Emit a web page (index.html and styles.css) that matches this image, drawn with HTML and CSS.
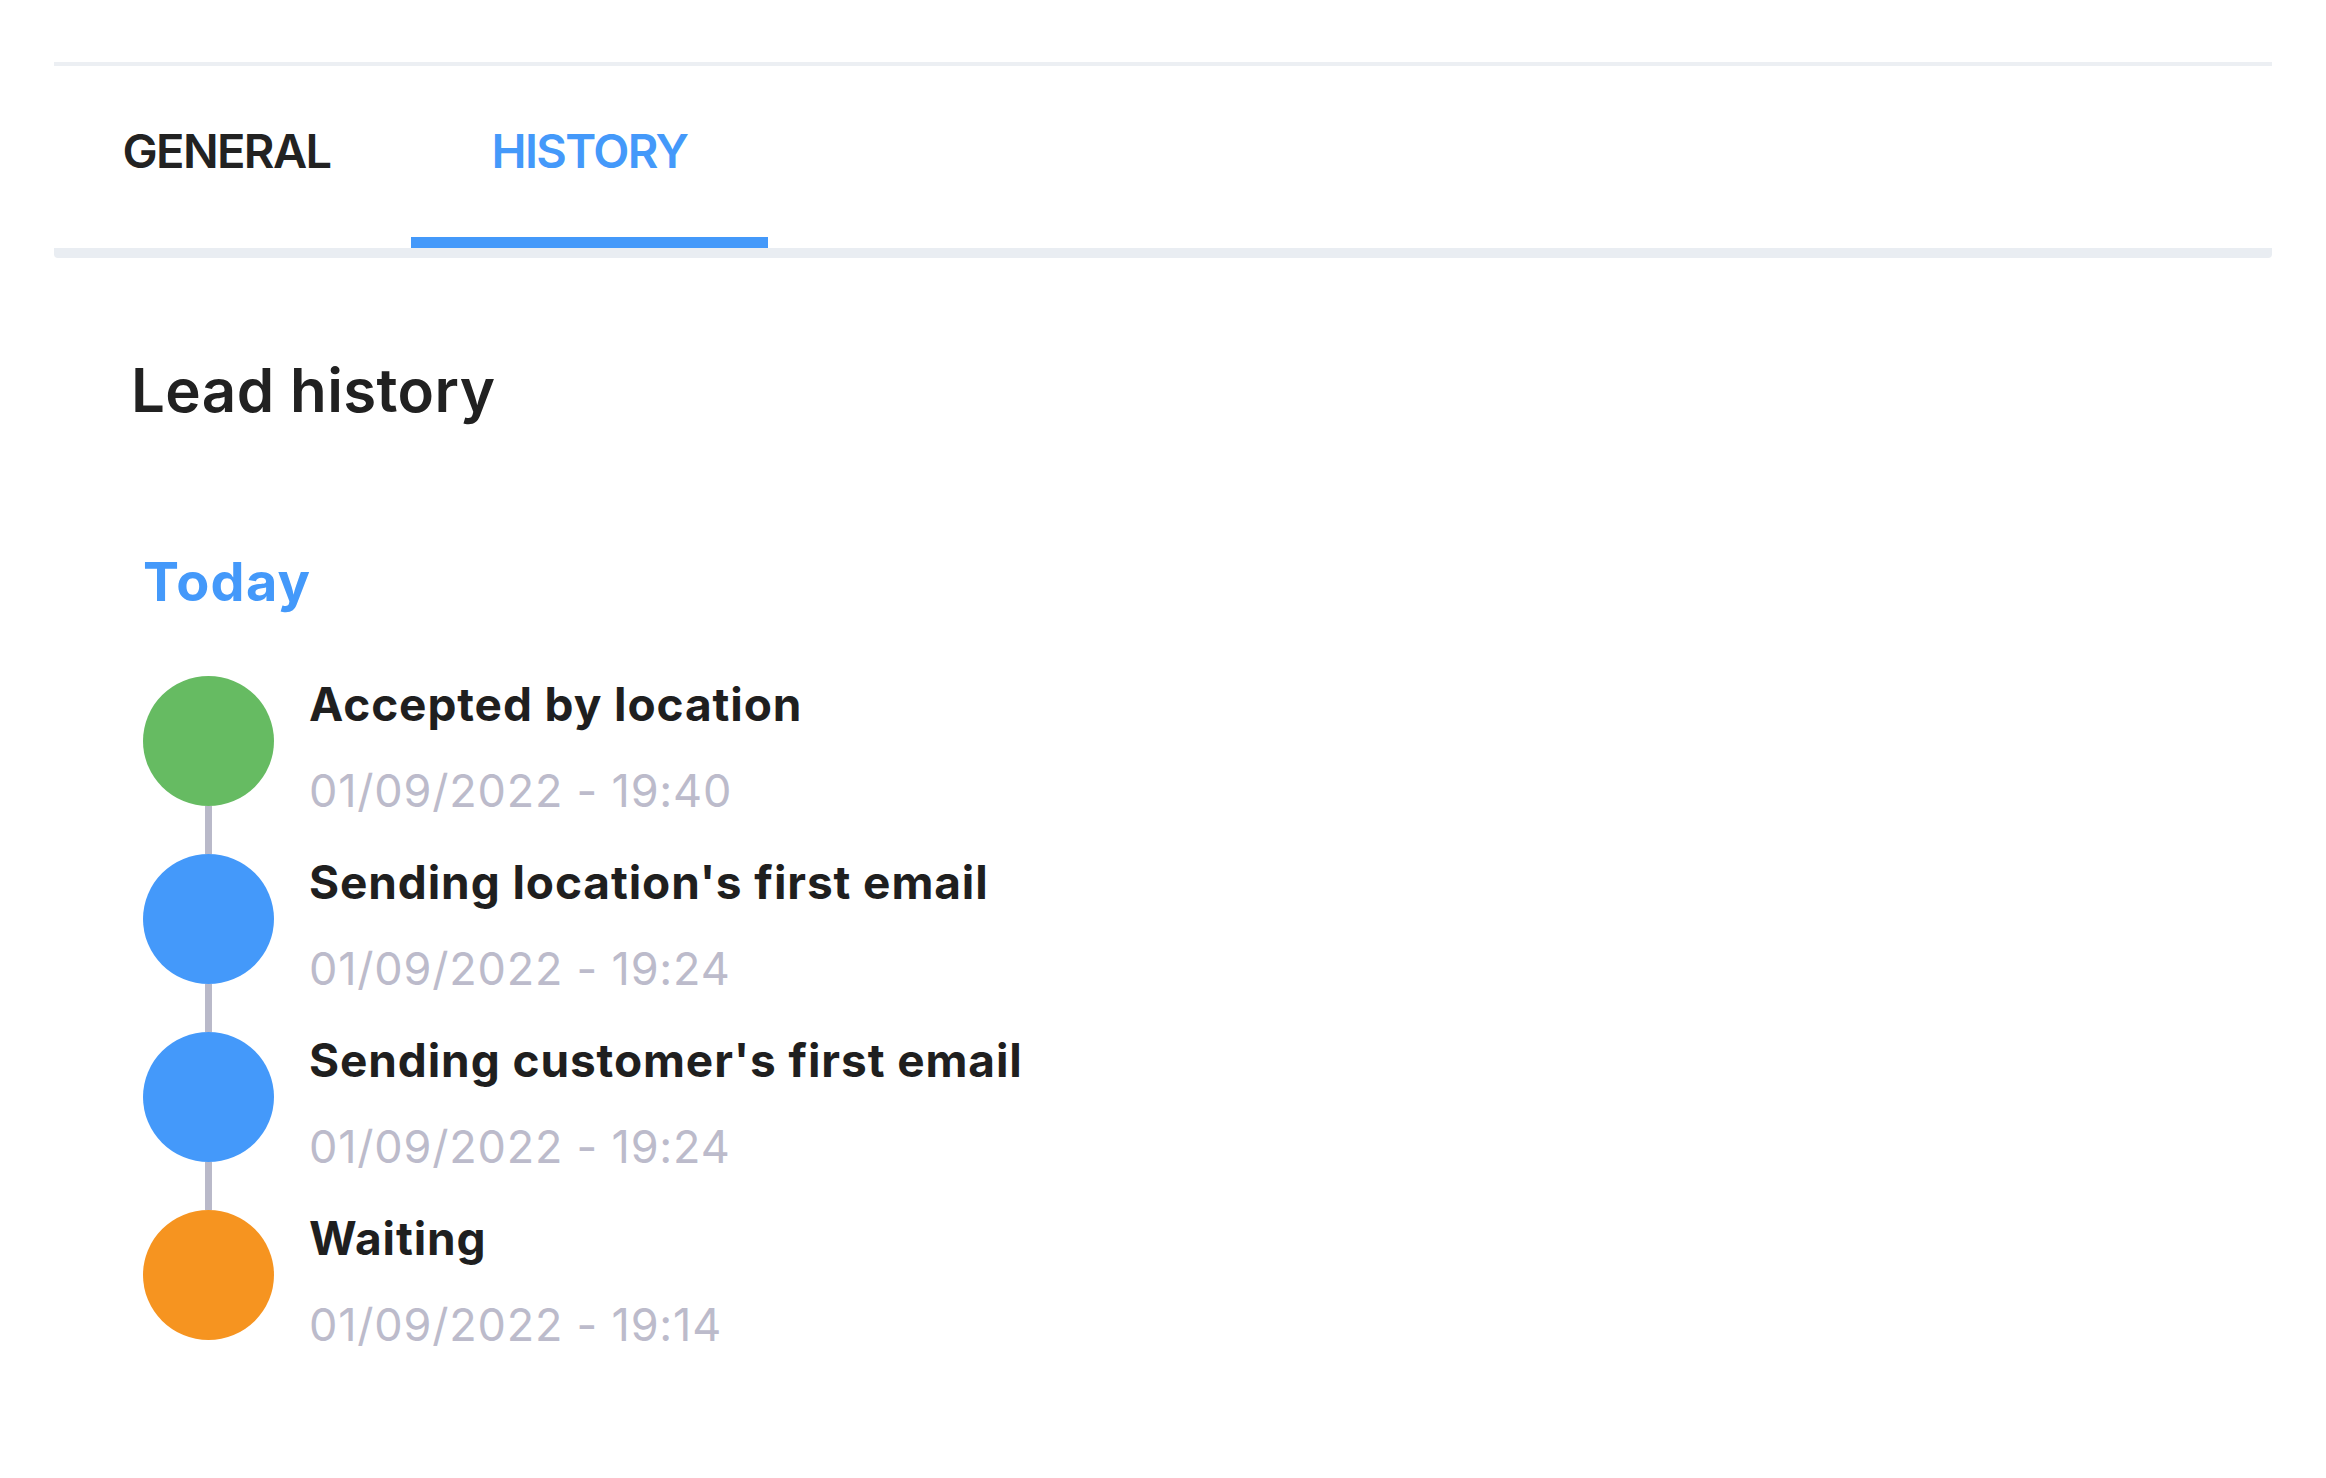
FILE: index.html
```html
<!DOCTYPE html>
<html lang="en">
<head>
<meta charset="utf-8">
<title>Lead history</title>
<link rel="stylesheet" href="styles.css">
</head>
<body>
<div class="page">
  <nav class="tabs">
    <div class="tab tab-first">GENERAL</div>
    <div class="tab tab-active">HISTORY</div>
  </nav>
  <section class="history">
    <h1 class="history-title">Lead history</h1>
    <h2 class="day">Today</h2>
    <ul class="timeline">
      <li class="event">
        <div class="marker"><span class="dot dot-green"></span><span class="line"></span></div>
        <div class="event-text">
          <div class="event-name">Accepted by location</div>
          <div class="event-date">01/09/2022 - 19:40</div>
        </div>
      </li>
      <li class="event">
        <div class="marker"><span class="dot dot-blue"></span><span class="line"></span></div>
        <div class="event-text">
          <div class="event-name">Sending location's first email</div>
          <div class="event-date">01/09/2022 - 19:24</div>
        </div>
      </li>
      <li class="event">
        <div class="marker"><span class="dot dot-blue"></span><span class="line"></span></div>
        <div class="event-text">
          <div class="event-name">Sending customer's first email</div>
          <div class="event-date">01/09/2022 - 19:24</div>
        </div>
      </li>
      <li class="event event-last">
        <div class="marker"><span class="dot dot-orange"></span></div>
        <div class="event-text">
          <div class="event-name">Waiting</div>
          <div class="event-date">01/09/2022 - 19:14</div>
        </div>
      </li>
    </ul>
  </section>
</div>
</body>
</html>
```

FILE: styles.css
```css
* { box-sizing: border-box; }
html, body { margin: 0; background: #ffffff; }
body {
  font-family: Inter, "Open Sans", "Liberation Sans", sans-serif;
  color: #212121;
}
.page {
  padding: 62px 54px 0 54px;
}
.tabs {
  display: flex;
  height: 196px;
  border-top: 4px solid #eceff3;
  border-bottom: 10px solid #e9edf2;
  border-radius: 0 0 4px 4px;
}
.tab {
  width: 357px;
  display: flex;
  align-items: center;
  justify-content: center;
  padding-bottom: 14px;
  font-size: 47px;
  font-weight: 600;
  color: #222222;
  letter-spacing: -1.6px;
}
.tab-first {
  padding-right: 12px;
}
.tab-active {
  color: #4499fa;
  border-bottom: 11px solid #4499fa;
  padding-bottom: 3px;
}
.history {
  padding-left: 89px;
}
.history-title {
  margin: 0;
  margin-left: -12px;
  padding-top: 96px;
  font-size: 60px;
  line-height: 72px;
  font-weight: 600;
  letter-spacing: 0.4px;
  color: #212121;
}
.day {
  margin: 0;
  padding-top: 124px;
  font-size: 54px;
  line-height: 64px;
  font-weight: 700;
  letter-spacing: 1.3px;
  color: #4499fa;
}
.timeline {
  list-style: none;
  margin: 0;
  padding: 0;
  padding-top: 62px;
}
.event {
  display: flex;
  gap: 35px;
}
.marker {
  display: flex;
  flex-direction: column;
  align-items: center;
  width: 131px;
}
.dot {
  width: 131px;
  height: 130px;
  border-radius: 50%;
  flex: none;
}
.dot-green { background: #66bb62; }
.dot-blue { background: #4499fa; }
.dot-orange { background: #f69420; }
.line {
  width: 7px;
  height: 48px;
  background: #b9b9c9;
}
.event-name {
  font-size: 46px;
  line-height: 56px;
  font-weight: 700;
  letter-spacing: 0.9px;
  color: #1f1f1f;
}
.event-date {
  margin-top: 31px;
  font-size: 45px;
  line-height: 56px;
  font-weight: 400;
  letter-spacing: 0.8px;
  color: #bcbbcb;
}
```
